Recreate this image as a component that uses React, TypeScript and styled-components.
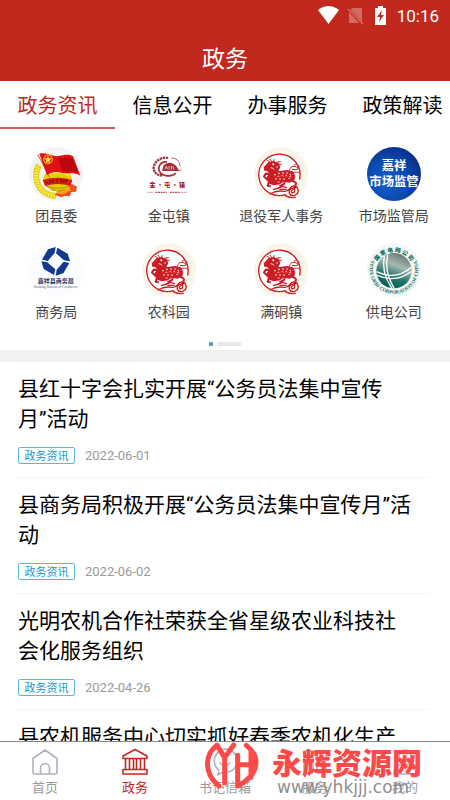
import React from "react";
import styled, { createGlobalStyle } from "styled-components";

const RED = "#c1281e";
const SANS = 'Roboto, "Noto Sans CJK SC", sans-serif';

const GlobalStyle = createGlobalStyle`
  * { box-sizing: border-box; }
  body { margin: 0; background: #fff; font-family: ${SANS}; }
  button { border: 0; padding: 0; background: none; font: inherit; cursor: pointer; }
  a { color: inherit; text-decoration: none; }
`;

const Screen = styled.div`
  display: flex;
  flex-direction: column;
  height: 100vh;
  overflow: hidden;
  background: #fff;
`;

const Header = styled.header`
  flex: none;
  background: ${RED};
  color: #fff;
`;

const StatusBar = styled.div`
  display: flex;
  align-items: center;
  justify-content: flex-end;
  height: 32px;
  padding-right: 11px;
`;

const StatusIcons = styled.svg`
  display: block;
  width: 70px;
  height: 20px;
  margin-right: 9px;
`;

const Clock = styled.time`
  font-size: 17px;
  line-height: 32px;
`;

const PageTitle = styled.h1`
  margin: 0;
  height: 49px;
  font-size: 23px;
  font-weight: 400;
  line-height: 55px;
  text-align: center;
`;

const Tabs = styled.nav`
  display: flex;
  flex: none;
  overflow: hidden;
`;

const Tab = styled.button<{ $active?: boolean }>`
  flex: none;
  width: 115px;
  height: 48px;
  padding-top: 4px;
  border-bottom: 2px solid ${(p) => (p.$active ? "#c4625a" : "transparent")};
  color: ${(p) => (p.$active ? RED : "#000")};
  font-size: 20px;
  line-height: 42px;
  white-space: nowrap;
`;

const Content = styled.main`
  flex: 1;
  min-height: 0;
  overflow: hidden;
`;

const Departments = styled.section`
  display: grid;
  grid-template-columns: repeat(4, 1fr);
  row-gap: 12px;
  padding-top: 18px;
`;

const Department = styled.a`
  display: flex;
  flex-direction: column;
  align-items: center;
  color: #444;
  font-size: 14px;
  line-height: 30px;
`;

const Emblem = styled.svg`
  display: block;
  width: 54px;
  height: 54px;
`;

const Pager = styled.div`
  display: flex;
  align-items: center;
  justify-content: center;
  gap: 4px;
  height: 23px;
  padding-top: 11px;
`;

const PagerMark = styled.span<{ $current?: boolean }>`
  width: ${(p) => (p.$current ? 4 : 24)}px;
  height: 4px;
  border-radius: 1px;
  background: ${(p) => (p.$current ? "#4a9de0" : "#e8e8e8")};
`;

const Band = styled.div`
  height: 12px;
  background: #f1f1f1;
`;

const NewsList = styled.ul`
  margin: 0;
  padding: 0;
  list-style: none;
`;

const NewsItem = styled.li`
  margin: 0 21px 0 18px;
  padding: 12px 0 13px;
  border-bottom: 1px solid #f3f3f3;
`;

const NewsTitle = styled.h2`
  margin: 0;
  padding-right: 14px;
  color: #000;
  font-size: 21px;
  font-weight: 400;
  line-height: 30px;
`;

const Meta = styled.div`
  display: flex;
  align-items: center;
  gap: 10px;
  margin-top: 13px;
`;

const Tag = styled.span`
  width: 57px;
  height: 17px;
  border: 1px solid #5cb8e0;
  border-radius: 2px;
  color: #1896d6;
  font-size: 11px;
  line-height: 17px;
  text-align: center;
`;

const DateText = styled.time`
  color: #999;
  font-size: 13px;
  line-height: 17px;
`;

const BottomNav = styled.nav`
  position: relative;
  display: grid;
  grid-template-columns: repeat(5, 1fr);
  flex: none;
  height: 59px;
  border-top: 1px solid #888;
  background: #fff;
`;

const NavLink = styled.a<{ $active?: boolean }>`
  display: flex;
  flex-direction: column;
  align-items: center;
  padding-top: 6px;
  color: ${(p) => (p.$active ? RED : "#999")};
  font-size: 13px;
  line-height: 24px;
`;

const NavIcon = styled.svg<{ $active?: boolean }>`
  display: block;
  width: 28px;
  height: 28px;
  fill: none;
  stroke: ${(p) => (p.$active ? RED : "#aeb0bd")};
  stroke-width: 1.6;
  stroke-linecap: round;
  stroke-linejoin: round;
`;

const Watermark = styled.div`
  position: absolute;
  right: 28px;
  bottom: 4px;
  display: flex;
  gap: 12px;
  pointer-events: none;
`;

const WatermarkLogo = styled.svg`
  display: block;
  width: 55px;
  height: 48px;
`;

const WatermarkText = styled.div`
  display: flex;
  flex-direction: column;
  margin-top: 2px;
`;

const WatermarkName = styled.strong`
  color: #fb4a48;
  font-family: "Noto Sans CJK SC", sans-serif;
  font-size: 30px;
  font-weight: 900;
  line-height: 34px;
`;

const WatermarkUrl = styled.span`
  padding-left: 5px;
  color: #8f8f8f;
  font-family: "DejaVu Sans", sans-serif;
  font-size: 17px;
  line-height: 18px;
`;

const YouthLeague = () => (
  <Emblem viewBox="0 0 162 162" aria-hidden="true">
    <circle cx="81" cy="81" r="81" fill="#f3f3f3" />
    <path d="M31 54C12 82 22 126 57 142l24 6" fill="none" stroke="#e3cc14" strokeWidth="18" />
    <path d="M31 54C12 82 22 126 57 142l24 6" fill="none" stroke="#fff25c" strokeWidth="12" strokeDasharray="4 4" />
    <path d="M77 143l13-12 38-20 16 8-3 15-14 1-5 13-16-2-9 5z" fill="#ed4b20" />
    <path d="M80 138l40-20 6 12-27 13z" fill="#ff9c24" />
    <ellipse cx="86" cy="98" rx="43" ry="34" fill="#edc900" />
    <path d="M52 117q34 14 68 0M66 128q21 9 42 0" fill="none" stroke="#a8920e" strokeWidth="3" />
    <path d="M55 84q31-16 65 0" fill="none" stroke="#fff25c" strokeWidth="5" />
    <path d="M26 22L62 91" stroke="#b07818" strokeWidth="3" />
    <path d="M31 20c25-6 38 10 58 7 18-3 28-7 43 1l22 58c-22-12-32-4-52-8-18-3-27-8-48 7z" fill="#df1114" />
    <path d="M87 29c17 10 28-2 43 4l18 43c-24-7-32 2-48-5z" fill="#bb080d" />
    <circle cx="57" cy="37" r="13" fill="#de1712" stroke="#f2d429" strokeWidth="3" />
    <path d="M57 26l3 8 8 0-6 6 2 9-7-5-8 5 3-9-7-6h9z" fill="#f8df35" />
    <path d="M41 99q44-14 89 0l-6 18q-37-12-76 0z" fill="#d91a16" />
    <path d="M53 104l4 6m7-10v8m10-10l-4 9m14-10v9m10-9l5 9m6-9v9m9-8l-4 7" stroke="#6e1910" strokeWidth="4" />
  </Emblem>
);

const JintunTown = () => (
  <Emblem viewBox="0 0 162 162" aria-hidden="true">
    <g transform="translate(0 0)">
      <path d="M78 33C60 28 36 43 35 62c0 15 12 25 28 23" fill="none" stroke="#a52d38" strokeWidth="7" strokeDasharray="7 2" />
      <path d="M75 45c-20-4-31 18-20 32 12 14 39 11 46 1" fill="none" stroke="#a52d38" strokeWidth="5" />
      <path d="M65 54q22-16 38 4l9 14H60z" fill="#a52d38" />
      <path d="M69 67l4-9 4 9m4 1V57m7 11V57m8 11l-4-10" fill="none" stroke="#fff" strokeWidth="2" />
      <path d="M88 33q24 0 26 24M105 72l13-3" fill="none" stroke="#be6069" strokeWidth="3" />
    </g>
    <text x="76" y="120" textAnchor="middle" fill="#9e202b" fontFamily="Noto Sans CJK SC, sans-serif" fontSize="18" fontWeight="900">金 · 屯 · 镇</text>
    <path d="M16 136h18m82 0h20" stroke="#be797b" strokeWidth="2" />
    <path d="M40 136h34m9 0h31" stroke="#b35356" strokeWidth="4" strokeDasharray="6 2" />
  </Emblem>
);

const Kirin = () => (
  <Emblem viewBox="0 0 162 162" aria-hidden="true">
    <circle cx="81" cy="81" r="81" fill="#faf5e8" />
    <circle cx="77" cy="82" r="61" fill="#fff" />
    <g fill="none" stroke="#ca1d24" strokeLinecap="round" strokeLinejoin="round">
      <path d="M94 143A62 62 0 1 1 137 96" strokeWidth="4" />
      <path d="M46 44l-7-4m13 3l-3-6m10 7l2-6m6 8l12-2m-8 6l11 3M42 52l-5 5 7 4-4 5 11 1" strokeWidth="3" />
      <path d="M50 84L36 79l-6 9 9 10m18-2l-12 8-4 12 7 2m66-18l12 8-3 14-7 3m-22-27l-4 13-11 6" strokeWidth="6" />
      <path d="M106 70q4-15 17-12 13 3 9 8-9 5-17 1m-12 11q10 2 18-2 10-3 15 2" strokeWidth="3" />
      <path d="M121 54q8-8 13 3" strokeWidth="3" />
      <path d="M58 127q16-2 25-8l14 2m-19 6h18M48 141q19-12 42-8c18 3 15-16 29-16 16 0 18 23 3 28-16 4-23-15-10-20 10-3 14 10 5 12-5 1-7-5-3-7M94 146q12 8 30 5" strokeWidth="4" />
    </g>
    <path d="M44 45l15-3 15 7 5 12-7 12 26-4 18 4 8 14-3 13-13 7-20-3-10 8-20 3-15-6-6-16 8-14-6-8-8 1-2-11z" fill="#ca1d24" />
    <path d="M60 84q3-4 6 0m6-4q3-4 6 0m6-1q3-4 6 0m6 0q3-4 6 0m4 4q3-4 6 0m-42 6q3-4 6 0m6-2q3-4 6 0m6 0q3-4 6 0m6 2q3-4 6 0m-49 8q3-4 6 0m6 0q3-4 6 0m6 0q3-4 6 0m10-2q3-4 6 0m-38 11q3-4 6 0M50 62q8 0 10 6m7-7l5-2" fill="none" stroke="#fff" strokeWidth="2.5" />
    <circle cx="58" cy="52" r="3" fill="#fff" />
  </Emblem>
);

const MarketBureau = () => (
  <Emblem viewBox="0 0 162 162" aria-hidden="true">
    <defs>
      <radialGradient id="market" cx="35%" cy="65%" r="70%">
        <stop offset="0" stopColor="#1260cd" />
        <stop offset="0.6" stopColor="#0c48ac" />
        <stop offset="1" stopColor="#0a2f8a" />
      </radialGradient>
    </defs>
    <circle cx="81" cy="81" r="81" fill="url(#market)" />
    <g fill="#fff" fontFamily="Noto Sans CJK SC, sans-serif" fontSize="37" fontWeight="700" textAnchor="middle">
      <text x="81" y="70">嘉祥</text>
      <text x="81" y="118">市场监管</text>
    </g>
  </Emblem>
);

const CommerceBureau = () => (
  <Emblem viewBox="0 0 162 162" aria-hidden="true">
    <circle cx="81" cy="81" r="80" fill="#fafcff" />
    <g fill="#143a8e" transform="translate(80 55)">
      {[0, 90, 180, 270].map((angle) => (
        <path key={angle} transform={`rotate(${angle})`} d="M-41-5L-23-36 0-43-3-25-24-1z" />
      ))}
    </g>
    <text x="80" y="121" textAnchor="middle" fill="#28345c" fontFamily="Noto Sans CJK SC, sans-serif" fontSize="18" fontWeight="700">嘉祥县商务局</text>
    <text x="80" y="134" textAnchor="middle" fill="#60647b" fontFamily="Liberation Serif, serif" fontSize="11">Jiaxiang Bureau of Commerce</text>
  </Emblem>
);

const StateGrid = () => (
  <Emblem viewBox="0 0 162 162" aria-hidden="true">
    <defs>
      <linearGradient id="globe" x1="0.7" y1="0" x2="0.3" y2="1">
        <stop offset="0" stopColor="#63756f" />
        <stop offset="0.35" stopColor="#a7b8b2" />
        <stop offset="0.65" stopColor="#26786c" />
        <stop offset="1" stopColor="#005c50" />
      </linearGradient>
      <path id="grid-top" d="M20 88A61 61 0 0 1 142 88" />
      <path id="grid-bottom" d="M13 53A73 73 0 1 0 149 53" />
    </defs>
    <circle cx="81" cy="81" r="81" fill="#f2f8f6" />
    <circle cx="81" cy="83" r="53" fill="url(#globe)" />
    <path d="M29 86q58 28 104-13M30 97q56 24 102-11M52 39q-10 50 22 96M62 35q-12 49 19 101" fill="none" stroke="#fff" strokeWidth="4" />
    <text fill="#176e61" fontFamily="Noto Sans CJK SC, sans-serif" fontSize="17" fontWeight="900">
      <textPath href="#grid-top" startOffset="50%" textAnchor="middle">国 家 电 网 公 司</textPath>
    </text>
    <text fill="#176e61" fontFamily="Liberation Serif, serif" fontSize="15" fontWeight="700">
      <textPath href="#grid-bottom" startOffset="50%" textAnchor="middle">STATE GRID CORPORATION OF CHINA</textPath>
    </text>
  </Emblem>
);

const departments = [
  { name: "团县委", Icon: YouthLeague },
  { name: "金屯镇", Icon: JintunTown },
  { name: "退役军人事务", Icon: Kirin },
  { name: "市场监管局", Icon: MarketBureau },
  { name: "商务局", Icon: CommerceBureau },
  { name: "农科园", Icon: Kirin },
  { name: "满硐镇", Icon: Kirin },
  { name: "供电公司", Icon: StateGrid },
];

const news = [
  { title: "县红十字会扎实开展“公务员法集中宣传月”活动", date: "2022-06-01" },
  { title: "县商务局积极开展“公务员法集中宣传月”活动", date: "2022-06-02" },
  { title: "光明农机合作社荣获全省星级农业科技社会化服务组织", date: "2022-04-26" },
  { title: "县农机服务中心切实抓好春季农机化生产", date: "2022-04-26" },
];

const navItems = [
  { label: "首页", icon: <path d="M2 10.500L14 2l12 8.500v14q0 1.500-1.500 1.500h-21Q2 26 2 24.500zM9.500 26v-6a4.500 4.500 0 0 1 9 0v6" /> },
  { label: "政务", icon: <path d="M2 8L14 1.500 26 8v2.500H2zM4.500 10.500V21m4-10.500V21m4-10.500V21m3-10.500V21m4-10.500V21m4-10.500V21M2 21.500h24V26H2z" /> },
  { label: "书记信箱", icon: <path d="M8 24l-1.500 3 6-3A11.500 11.500 0 1 0 8 22M9 15q5 5 10 0" /> },
  { label: "服务", icon: <path d="M3 3h9v9H3zM16 3h9v9h-9zM3 16h9v9H3zM16 16h9v9h-9z" /> },
  { label: "我的", icon: <path d="M14 2a6 6 0 1 1 0 12 6 6 0 0 1 0-12M3 26q0-10 11-10t11 10z" /> },
];

export default function App() {
  return (
    <Screen>
      <GlobalStyle />
      <Header>
        <StatusBar>
          <StatusIcons viewBox="0 0 70 20" aria-hidden="true">
            <path d="M0 4q10.500-8 21 0L10.500 18z" fill="#fff" />
            <path d="M34 2h10v15H31V6z" fill="#d56a62" />
            <path d="M29 2l16 17" stroke={RED} strokeWidth="3" />
            <path d="M30 3l15 15" stroke="#d56a62" strokeWidth="1.500" />
            <path d="M57 2h3V0h5v2h3v17H57z" fill="#fff" />
            <path d="M64 4l-5 7h3l-1 5 5-7h-3z" fill={RED} />
          </StatusIcons>
          <Clock>10:16</Clock>
        </StatusBar>
        <PageTitle>政务</PageTitle>
      </Header>
      <Tabs>
        <Tab $active>政务资讯</Tab>
        <Tab>信息公开</Tab>
        <Tab>办事服务</Tab>
        <Tab>政策解读</Tab>
      </Tabs>
      <Content>
        <Departments>
          {departments.map(({ name, Icon }) => (
            <Department key={name} href="#">
              <Icon />
              {name}
            </Department>
          ))}
        </Departments>
        <Pager>
          <PagerMark $current />
          <PagerMark />
        </Pager>
        <Band />
        <NewsList>
          {news.map((item) => (
            <NewsItem key={item.title}>
              <NewsTitle>{item.title}</NewsTitle>
              <Meta>
                <Tag>政务资讯</Tag>
                <DateText>{item.date}</DateText>
              </Meta>
            </NewsItem>
          ))}
        </NewsList>
      </Content>
      <BottomNav>
        {navItems.map((item) => (
          <NavLink key={item.label} href="#" $active={item.label === "政务"}>
            <NavIcon viewBox="0 0 28 28" $active={item.label === "政务"} aria-hidden="true">
              {item.icon}
            </NavIcon>
            {item.label}
          </NavLink>
        ))}
        <Watermark>
          <WatermarkLogo viewBox="0 0 165 144" aria-hidden="true">
            <g fill="none" stroke="#fb4a48" strokeWidth="15" strokeLinecap="round" strokeLinejoin="round">
              <path d="M36 10C-3 40-3 95 42 132" />
              <path d="M36 10l23 37 27-38M59 47v75" />
              <path d="M98 40v92M98 68h38M124 10c42 34 42 86-26 122M138 30v76" />
            </g>
          </WatermarkLogo>
          <WatermarkText>
            <WatermarkName>永辉资源网</WatermarkName>
            <WatermarkUrl>www.yhkjjj.com</WatermarkUrl>
          </WatermarkText>
        </Watermark>
      </BottomNav>
    </Screen>
  );
}
